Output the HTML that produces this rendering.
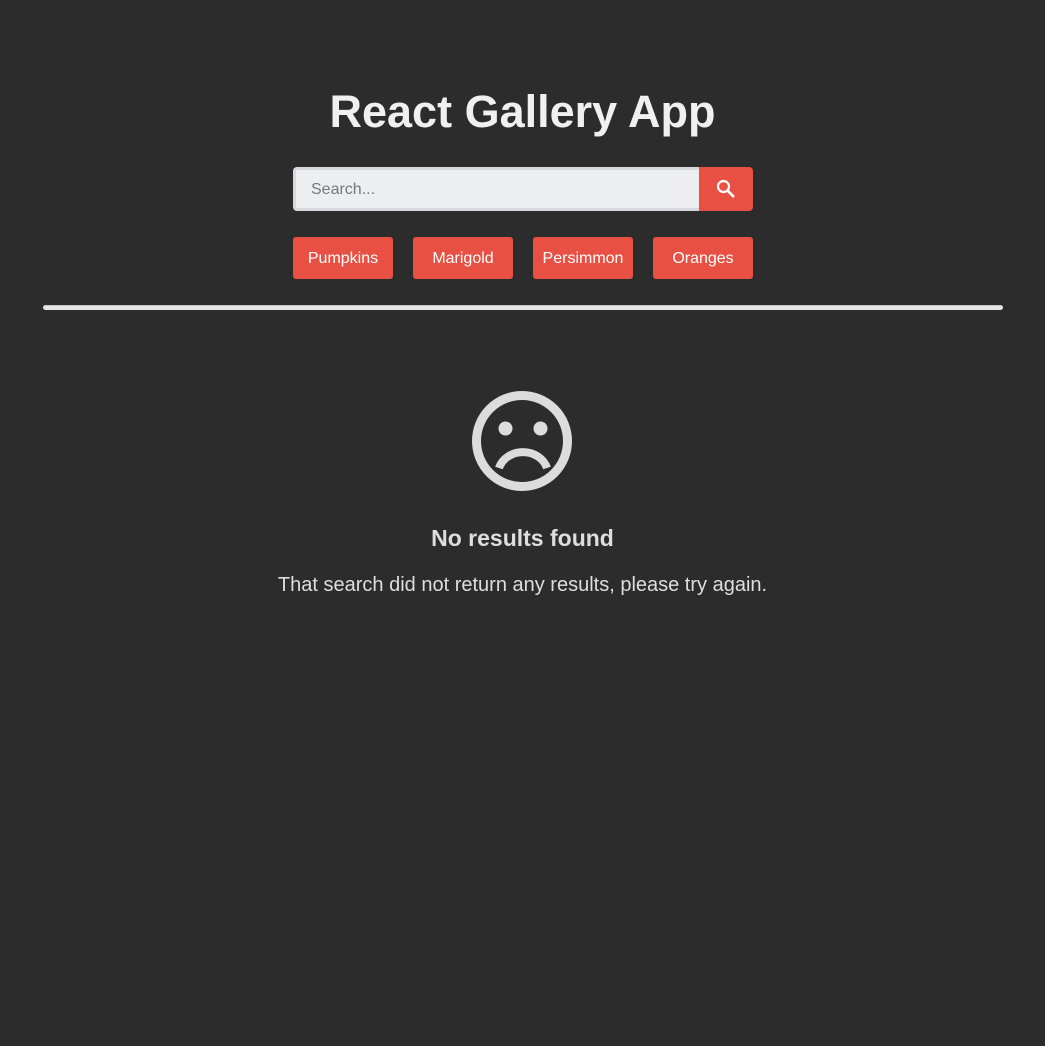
<!DOCTYPE html>
<html><head><style>
body{margin:0;background:#2c2c2c;font-family:"Liberation Sans",Arial,sans-serif;width:1045px;height:1046px;overflow:hidden;position:relative}
h1{position:absolute;top:84px;left:0;width:1045px;text-align:center;margin:0;font-size:45px;line-height:56px;color:#f0f0f0;font-weight:bold}
.search{position:absolute;left:293px;top:167px;width:406px;height:44px;box-sizing:border-box;background:#edeef0;border:3px solid #d5d8dc;border-right:none;border-radius:4px 0 0 4px;font-size:16px;color:#777;padding-left:15px;line-height:40px}
.sbtn{position:absolute;left:699px;top:167px;width:54px;height:44px;background:#e85043;border-radius:0 4px 4px 0}
.tag{position:absolute;top:237px;width:100px;height:42px;background:#e85043;border-radius:3px;color:#fff;font-size:16px;text-align:center;line-height:43px}
hr{position:absolute;left:43px;top:305px;width:960px;height:5px;margin:0;border:none;background:#e6e6e6;border-top:1px solid #c8c8c8;box-sizing:border-box;border-radius:3px}
h3{position:absolute;top:523px;left:0;width:1045px;text-align:center;margin:0;font-size:23px;line-height:30px;color:#dedede}
p{position:absolute;top:573px;left:0;width:1045px;text-align:center;margin:0;font-size:20px;line-height:24px;color:#dedede}
</style></head><body>
<h1>React Gallery App</h1>
<div class="search">Search...</div>
<div class="sbtn"><svg width="54" height="44" viewBox="0 0 54 44"><circle cx="24.5" cy="19.5" r="5.5" fill="none" stroke="#fff" stroke-width="2.2"/><path d="M28.5 23.5L34 29" stroke="#fff" stroke-width="2.6" stroke-linecap="square"/></svg></div>
<div class="tag" style="left:293px">Pumpkins</div>
<div class="tag" style="left:413px">Marigold</div>
<div class="tag" style="left:533px">Persimmon</div>
<div class="tag" style="left:653px">Oranges</div>
<hr>
<svg style="position:absolute;left:462px;top:381px" width="120" height="120" viewBox="0 0 120 120">
<circle cx="60" cy="60" r="45.5" fill="none" stroke="#dcdcdc" stroke-width="9"/>
<circle cx="43.5" cy="47.5" r="7" fill="#dcdcdc"/><circle cx="78.5" cy="47.5" r="7" fill="#dcdcdc"/>
<path d="M37 87A25 22 0 0 1 85 87" fill="none" stroke="#dcdcdc" stroke-width="8"/>
</svg>
<h3>No results found</h3>
<p>That search did not return any results, please try again.</p>
</body></html>
